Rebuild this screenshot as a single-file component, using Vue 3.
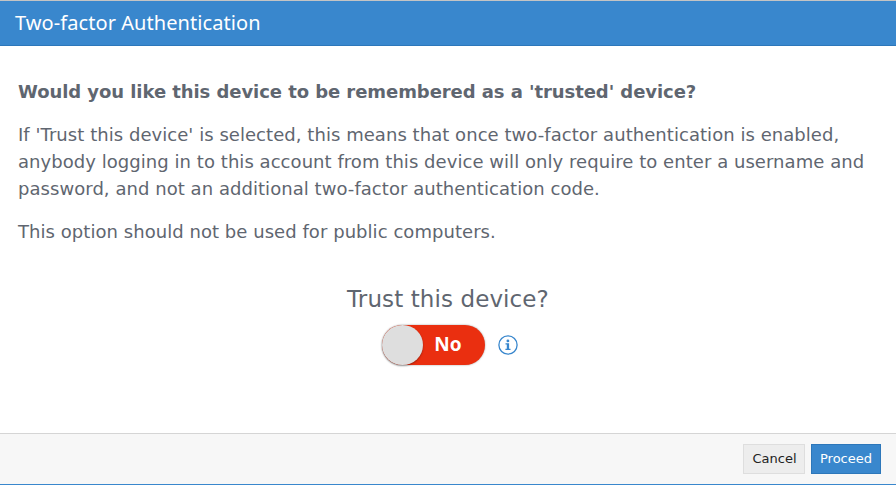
<script setup>
import { computed, ref } from "vue";

const trusted = ref(false);
const toggleLabel = computed(() => (trusted.value ? "Yes" : "No"));

function toggle() {
    trusted.value = !trusted.value;
}
</script>

<template>
    <div class="dialog">
        <header class="dialog__header">
            <h1 class="dialog__title">Two-factor Authentication</h1>
        </header>

        <main class="dialog__body">
            <p class="dialog__question">Would you like this device to be remembered as a 'trusted' device?</p>
            <p class="dialog__text">
                If 'Trust this device' is selected, this means that once two-factor authentication is enabled,<br />
                anybody logging in to this account from this device will only require to enter a username and<br />
                password, and not an additional two-factor authentication code.
            </p>
            <p class="dialog__text">This option should not be used for public computers.</p>

            <div class="trust">
                <div class="trust__label">Trust this device?</div>
                <div class="trust__row">
                    <button
                        type="button"
                        class="switch"
                        :class="{ 'switch--on': trusted }"
                        role="switch"
                        :aria-checked="trusted"
                        @click="toggle"
                    >
                        <span class="switch__knob"></span>
                        <span class="switch__text">{{ toggleLabel }}</span>
                    </button>
                    <svg class="trust__info" width="20" height="20" viewBox="0 0 20 20" fill="none">
                        <circle cx="10" cy="10" r="9.1" stroke="currentColor" stroke-width="1.3" />
                        <circle cx="9.9" cy="5.9" r="1.4" fill="currentColor" />
                        <path d="M7.5 8.2H11.1V13.8H12.5V15H7.4V13.8H8.8V9.4H7.5Z" fill="currentColor" />
                    </svg>
                </div>
            </div>
        </main>

        <footer class="dialog__footer">
            <button type="button" class="btn">Cancel</button>
            <button type="button" class="btn btn--primary">Proceed</button>
        </footer>
    </div>
</template>

<style>
body {
    background: #fff;
}
</style>

<style scoped>
.dialog {
    box-sizing: border-box;
    height: 485px;
    display: flex;
    flex-direction: column;
    overflow: hidden;
    border-top: 1px solid #c4c4c4;
    border-bottom: 1px solid #3987cd;
    background: #fff;
    color: #5f6670;
    font-family: Verdana, "DejaVu Sans", sans-serif;
}

.dialog__header {
    box-sizing: border-box;
    height: 45px;
    padding: 0 15px 1px;
    display: flex;
    align-items: center;
    background: #3987cd;
    border-bottom: 1px solid #2d77ba;
    color: #fff;
}

.dialog__title {
    margin: 0;
    font-family: "Noto Sans", sans-serif;
    font-size: 20px;
    font-weight: 400;
    line-height: 27px;
    letter-spacing: 0.07px;
    white-space: nowrap;
}

.dialog__body {
    flex: 1;
    padding: 32px 18px 0;
    font-size: 18px;
    line-height: 27px;
    white-space: nowrap;
}

.dialog__question,
.dialog__text {
    margin: 0 0 16px;
}

.dialog__question {
    font-weight: 700;
    letter-spacing: -0.065px;
}

.dialog__text {
    letter-spacing: 0.05px;
}

.trust {
    padding-top: 21px;
    display: flex;
    flex-direction: column;
    align-items: center;
}

.trust__label {
    font-size: 23px;
    line-height: 34px;
    letter-spacing: 0.1px;
}

.trust__row {
    display: flex;
    align-items: center;
    gap: 13px;
    margin: 9px 0 0 4px;
}

.switch {
    width: 103px;
    height: 40px;
    padding: 0;
    display: flex;
    align-items: center;
    border: 0;
    border-radius: 20px;
    background: #ea2f10;
    box-shadow: 0 0 2px rgba(0, 0, 0, 0.4);
    color: #fff;
    cursor: pointer;
}

.switch--on {
    flex-direction: row-reverse;
    background: #3c9a45;
}

.switch__knob {
    width: 41px;
    height: 40px;
    border-radius: 50%;
    background: #dedede;
    box-shadow: 0 1px 2px rgba(0, 0, 0, 0.35);
}

.switch__text {
    width: 50px;
    padding-bottom: 2px;
    font: 700 19px "Noto Sans", sans-serif;
    text-align: center;
}

.trust__info {
    color: #3987cd;
}

.dialog__footer {
    box-sizing: border-box;
    height: 51px;
    padding: 10px 15px 0;
    display: flex;
    justify-content: flex-end;
    gap: 6px;
    border-top: 1px solid #d5d5d5;
    background: #f7f7f7;
}

.btn {
    box-sizing: border-box;
    width: 62px;
    height: 30px;
    padding: 0 0 2px 1px;
    border: 1px solid #dedede;
    background: #ededed;
    color: #222;
    font: 13px Verdana, "DejaVu Sans", sans-serif;
    cursor: pointer;
}

.btn--primary {
    width: 70px;
    padding-left: 0;
    border-color: #2d77ba;
    background: #3987cd;
    color: #fff;
}
</style>
